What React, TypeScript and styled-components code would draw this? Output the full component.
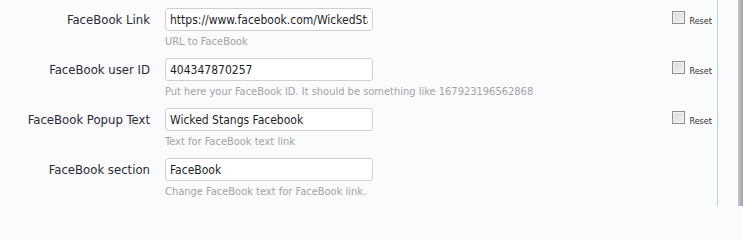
import React from "react";
import styled, { createGlobalStyle } from "styled-components";

const Global = createGlobalStyle`
  html, body { margin: 0; padding: 0; background: #fbfbfd; }
  body { font-family: "DejaVu Sans Condensed", "DejaVu Sans", sans-serif; }
`;

const Page = styled.div`
  display: flex;
  width: 743px;
  height: 206px;
  overflow: hidden;
`;

const Panel = styled.div`
  width: 717px;
  border-right: 1px solid #bccfd6;
  background: #fbfbfd;
`;

const Gutter = styled.div`
  width: 20px;
  background: #fafbfd;
`;

const ScrollEdge = styled.div`
  width: 5px;
  background: linear-gradient(to right, #c3c8cc, #9aa1a6);
`;

const Row = styled.div`
  display: grid;
  grid-template-columns: 150px 208px 1fr auto;
  column-gap: 15px;
  height: 50px;
  padding-top: 8px;
  box-sizing: border-box;
`;

const Label = styled.label`
  text-align: right;
  font-size: 13px;
  line-height: 23px;
  color: #2b2a33;
`;

const Field = styled.div`
  display: flex;
  flex-direction: column;
`;

const Input = styled.input`
  box-sizing: border-box;
  width: 208px;
  height: 23px;
  border: 1px solid #d0d0d0;
  border-radius: 3px;
  background: #fff;
  padding: 0 4px;
  font-family: inherit;
  font-size: 12px;
  color: #1e1e1e;
  outline: none;
`;

const Hint = styled.div`
  margin-top: 4px;
  font-size: 11px;
  line-height: 13px;
  color: #a3a3a3;
  white-space: nowrap;
`;

const ResetBox = styled.label`
  grid-column: 4;
  display: flex;
  align-items: flex-end;
  gap: 4px;
  height: 16px;
  margin-top: 3px;
  padding-right: 5px;
  font-size: 9px;
  color: #333;
`;

const Check = styled.span`
  box-sizing: border-box;
  width: 13px;
  height: 13px;
  border: 1px solid #8e8f8f;
  background: linear-gradient(135deg, #d8d8d8, #f4f4f4);
  box-shadow: inset 0 0 0 1px #f4f4f4;
  align-self: flex-start;
`;

const ResetText = styled.span`
  line-height: 11px;
`;

const rows = [
  { label: "FaceBook Link", value: "https://www.facebook.com/WickedStangs", hint: "URL to FaceBook", reset: true },
  { label: "FaceBook user ID", value: "404347870257", hint: "Put here your FaceBook ID. It should be something like 167923196562868", reset: true },
  { label: "FaceBook Popup Text", value: "Wicked Stangs Facebook", hint: "Text for FaceBook text link", reset: true },
  { label: "FaceBook section", value: "FaceBook", hint: "Change FaceBook text for FaceBook link.", reset: false },
];

export default function App() {
  return (
    <>
      <Global />
      <Page>
        <Panel>
          {rows.map((r) => (
            <Row key={r.label}>
              <Label>{r.label}</Label>
              <Field>
                <Input defaultValue={r.value} readOnly />
                <Hint>{r.hint}</Hint>
              </Field>
              {r.reset && (
                <ResetBox>
                  <Check />
                  <ResetText>Reset</ResetText>
                </ResetBox>
              )}
            </Row>
          ))}
        </Panel>
        <Gutter />
        <ScrollEdge />
      </Page>
    </>
  );
}
